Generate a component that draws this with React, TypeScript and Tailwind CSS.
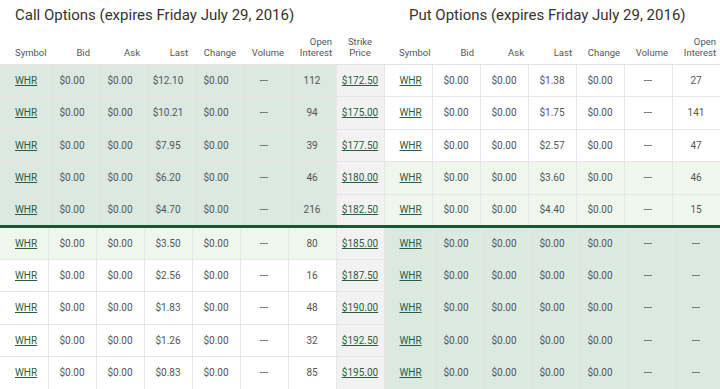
import React from "react";

type Row = { strike: string; call: [string, string]; put: [string, string]; callBg: string; putBg: string };

const G = "bg-[#dbe9e1]";
const L = "bg-[#eff7ed]";
const W = "bg-white";

const rows: Row[] = [
  { strike: "$172.50", call: ["$12.10", "112"], put: ["$1.38", "27"], callBg: G, putBg: W },
  { strike: "$175.00", call: ["$10.21", "94"], put: ["$1.75", "141"], callBg: G, putBg: W },
  { strike: "$177.50", call: ["$7.95", "39"], put: ["$2.57", "47"], callBg: G, putBg: W },
  { strike: "$180.00", call: ["$6.20", "46"], put: ["$3.60", "46"], callBg: G, putBg: L },
  { strike: "$182.50", call: ["$4.70", "216"], put: ["$4.40", "15"], callBg: G, putBg: L },
  { strike: "$185.00", call: ["$3.50", "80"], put: ["$0.00", "---"], callBg: L, putBg: G },
  { strike: "$187.50", call: ["$2.56", "16"], put: ["$0.00", "---"], callBg: W, putBg: G },
  { strike: "$190.00", call: ["$1.83", "48"], put: ["$0.00", "---"], callBg: W, putBg: G },
  { strike: "$192.50", call: ["$1.26", "32"], put: ["$0.00", "---"], callBg: W, putBg: G },
  { strike: "$195.00", call: ["$0.83", "85"], put: ["$0.00", "---"], callBg: W, putBg: G },
];

const font = { fontFamily: "Roboto, 'Liberation Sans', sans-serif" };

function Head() {
  const th = "font-normal text-[9.5px] leading-[11px] text-[#555] align-bottom pb-[6px] border-b border-[#e3e3e3]";
  const side = (
    <>
      <th className={`${th} text-left pl-[15px]`}>Symbol</th>
      <th className={`${th} text-right pr-[6px]`}>Bid</th>
      <th className={`${th} text-right pr-[4px]`}>Ask</th>
      <th className={`${th} text-right pr-[4px]`}>Last</th>
      <th className={`${th} text-right pr-[4px]`}>Change</th>
      <th className={`${th} text-right pr-[4px]`}>Volume</th>
      <th className={`${th} text-right pr-[4px]`}>
        Open
        <br />
        Interest
      </th>
    </>
  );
  return (
    <tr className="h-[33px]">
      {side}
      <th className={`${th} text-center`}>
        Strike
        <br />
        Price
      </th>
      {side}
    </tr>
  );
}

function Cells({ bg, last, oi, border }: { bg: string; last: string; oi: string; border: string }) {
  const td = `${bg} ${border} border-r border-r-[#e6eae7] text-center text-[10px] text-[#555]`;
  return (
    <>
      <td className={`${td} text-left pl-[15px]`}>
        <span className="underline text-[#2a5e3e]">WHR</span>
      </td>
      <td className={td}>$0.00</td>
      <td className={td}>$0.00</td>
      <td className={td}>{last}</td>
      <td className={td}>$0.00</td>
      <td className={td}>---</td>
      <td className={td}>{oi}</td>
    </>
  );
}

export default function App() {
  return (
    <div className="w-[720px] h-[389px] overflow-hidden bg-white" style={font}>
      <div className="flex h-[31px] items-center text-[15px] text-[#333]">
        <div className="w-[409px] pl-[15px]">Call Options (expires Friday July 29, 2016)</div>
        <div>Put Options (expires Friday July 29, 2016)</div>
      </div>
      <table className="w-[720px] table-fixed border-collapse">
        <colgroup>
          {Array.from({ length: 15 }).map((_, i) => (
            <col key={i} className="w-[48px]" />
          ))}
        </colgroup>
        <thead>
          <Head />
        </thead>
        <tbody>
          {rows.map((r, i) => {
            const border = i === 4 ? "border-b-[3px] border-b-[#1c5634]" : "border-b border-b-[#e6e6e6]";
            return (
              <tr key={i} className={i === 4 ? "h-[32.5px]" : "h-[32.5px]"}>
                <Cells bg={r.callBg} last={r.call[0]} oi={r.call[1]} border={border} />
                <td className={`bg-[#f2f2f2] ${border} border-r border-r-[#e6e6e6] text-center text-[10px]`}>
                  <span className="underline text-[#2a5e3e]">{r.strike}</span>
                </td>
                <Cells bg={r.putBg} last={r.put[0]} oi={r.put[1]} border={border} />
              </tr>
            );
          })}
        </tbody>
      </table>
    </div>
  );
}
